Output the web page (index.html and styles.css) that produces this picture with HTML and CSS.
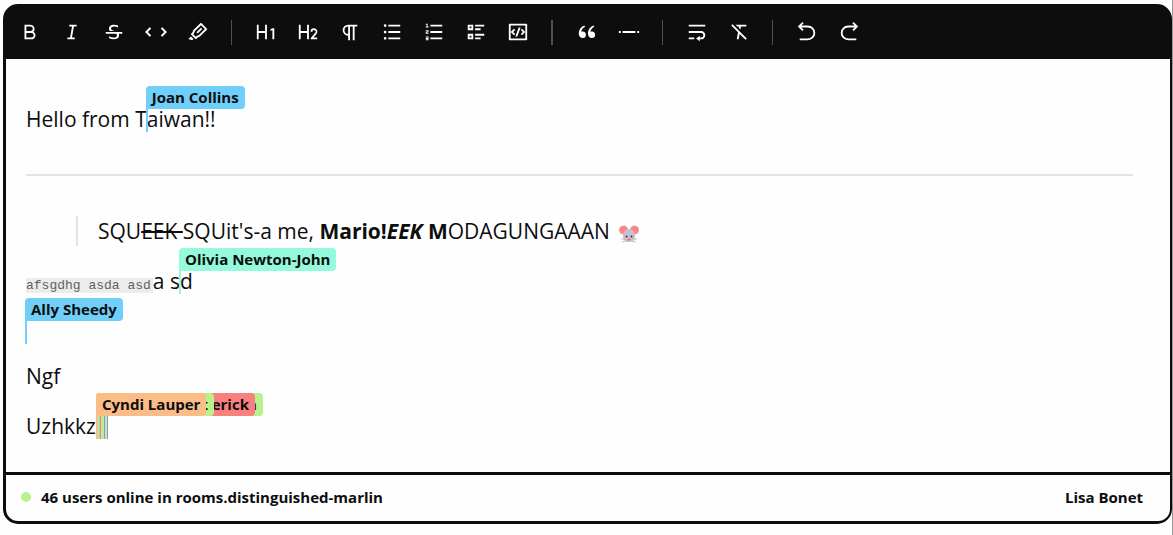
FILE: index.html
```html
<!DOCTYPE html>
<html lang="en">
<head>
<meta charset="utf-8">
<title>Collaborative editor</title>
<link rel="stylesheet" href="styles.css">
</head>
<body>
<main class="editor">
  <div class="toolbar" role="toolbar" aria-label="Formatting">
    <button class="tool" aria-label="Bold"><svg viewBox="0 0 24 24"><path d="M8 11h4.500a2.500 2.500 0 1 0 0-5H8v5zm10 4.500a4.500 4.500 0 0 1-4.500 4.500H6V4h6.500a4.500 4.500 0 0 1 3.256 7.606A4.498 4.498 0 0 1 18 15.500zM8 13v5h5.500a2.500 2.500 0 1 0 0-5H8z"/></svg></button>
    <button class="tool" aria-label="Italic"><svg viewBox="0 0 24 24"><path d="M15 20H7v-2h2.927l2.116-12H9V4h8v2h-2.927l-2.116 12H15z"/></svg></button>
    <button class="tool" aria-label="Strike"><svg viewBox="0 0 24 24"><path d="M17.154 14c.23.516.346 1.090.346 1.720 0 1.342-.524 2.392-1.571 3.147C14.880 19.622 13.433 20 11.586 20c-1.640 0-3.263-.381-4.870-1.144V16.600c1.520.877 3.075 1.316 4.666 1.316 2.551 0 3.830-.732 3.839-2.197a2.210 2.210 0 0 0-.648-1.603l-.12-.117H3v-2h18v2h-3.846zm-4.078-3H7.629a4.086 4.086 0 0 1-.481-.522C6.716 9.920 6.500 9.246 6.500 8.452c0-1.236.466-2.287 1.397-3.153C8.830 4.433 10.271 4 12.222 4c1.471 0 2.879.328 4.222.984v2.152c-1.200-.687-2.515-1.030-3.946-1.030-2.480 0-3.719.782-3.719 2.346 0 .420.218.786.654 1.099.436.313.974.562 1.613.750.620.180 1.297.414 2.030.699z"/></svg></button>
    <button class="tool" aria-label="Code"><svg viewBox="0 0 24 24"><path d="M6 7.500L1.500 12 6 16.500M18 7.500l4.500 4.500-4.500 4.500" fill="none" stroke="#fff" stroke-width="2.200"/></svg></button>
    <button class="tool" aria-label="Highlight"><svg viewBox="0 0 24 24"><path d="M15.243 4.515l-6.738 6.737-.707 2.121-1.040 1.041 2.828 2.829 1.040-1.041 2.122-.707 6.737-6.738-4.242-4.242zm6.364 3.535a1 1 0 0 1 0 1.414l-7.779 7.779-2.120.707-1.415 1.414a1 1 0 0 1-1.414 0l-4.243-4.243a1 1 0 0 1 0-1.414l1.414-1.414.707-2.121 7.779-7.779a1 1 0 0 1 1.414 0l5.657 5.657zm-6.364-.707l1.414 1.414-4.950 4.950-1.414-1.414 4.950-4.950zM4.283 16.890l2.828 2.829-1.414 1.414-4.243-1.414 2.828-2.829z"/></svg></button>
    <span class="divider"></span>
    <button class="tool" aria-label="Heading 1"><svg viewBox="0 0 24 24"><path d="M13 20h-2v-7H4v7H2V4h2v7h7V4h2v16zm8-12v12h-2v-9.796l-2 .536V8.670L19.500 8H21z"/></svg></button>
    <button class="tool" aria-label="Heading 2"><svg viewBox="0 0 24 24"><path d="M4 4v7h7V4h2v16h-2v-7H4v7H2V4h2zm14.500 4a3.750 3.750 0 0 1 2.978 6.029l-.148.180L18.034 18H22v2h-7v-1.556l4.820-5.546a1.750 1.750 0 1 0-3.065-1.292l-.005.144h-2A3.750 3.750 0 0 1 18.500 8z"/></svg></button>
    <button class="tool" aria-label="Paragraph"><svg viewBox="0 0 24 24"><path d="M12 6v15h-2v-5a6 6 0 1 1 0-12h10v2h-3v15h-2V6h-3zm-2 0a4 4 0 1 0 0 8V6z"/></svg></button>
    <button class="tool" aria-label="Bullet list"><svg viewBox="0 0 24 24"><path d="M8 4h13v2H8V4zM4.500 6.500a1.500 1.500 0 1 1 0-3 1.500 1.500 0 0 1 0 3zm0 7a1.500 1.500 0 1 1 0-3 1.500 1.500 0 0 1 0 3zm0 6.900a1.500 1.500 0 1 1 0-3 1.500 1.500 0 0 1 0 3zM8 11h13v2H8v-2zm0 7h13v2H8v-2z"/></svg></button>
    <button class="tool" aria-label="Ordered list"><svg viewBox="0 0 24 24"><path d="M8 4h13v2H8V4zM5 3v3h1v1H3V6h1V4H3V3h2zM3 14v-2.500h2V11H3v-1h3v2.500H4v.5h2v1H3zm2 5.500H3v-1h2V18H3v-1h3v4H3v-1h2v-.5zM8 11h13v2H8v-2zm0 7h13v2H8v-2z"/></svg></button>
    <button class="tool" aria-label="Task list"><svg viewBox="0 0 24 24"><path d="M11 4h10v2H11V4zm0 4h6v2h-6V8zm0 6h10v2H11v-2zm0 4h6v2h-6v-2zM3 4h6v6H3V4zm2 2v2h2V6H5zm-2 8h6v6H3v-6zm2 2v2h2v-2H5z"/></svg></button>
    <button class="tool" aria-label="Code block"><svg viewBox="0 0 24 24"><path d="M3 3h18a1 1 0 0 1 1 1v16a1 1 0 0 1-1 1H3a1 1 0 0 1-1-1V4a1 1 0 0 1 1-1zm1 2v14h16V5H4zm16 7l-3.536 3.536-1.414-1.415L17.172 12 15.050 9.879l1.414-1.415L20 12zM6.828 12l2.122 2.121-1.414 1.415L4 12l3.536-3.536L8.950 9.880 6.828 12zm4.416 5H9.116l3.640-10h2.128l-3.640 10z"/></svg></button>
    <span class="divider thick"></span>
    <button class="tool" aria-label="Blockquote"><svg viewBox="0 0 24 24"><path d="M4.583 17.321C3.553 16.227 3 15 3 13.011c0-3.500 2.457-6.637 6.030-8.188l.893 1.378c-3.335 1.804-3.987 4.145-4.247 5.621.537-.278 1.240-.375 1.929-.311 1.804.167 3.226 1.648 3.226 3.489a3.500 3.500 0 0 1-3.500 3.500c-1.073 0-2.099-.490-2.748-1.179zm10 0C13.553 16.227 13 15 13 13.011c0-3.500 2.457-6.637 6.030-8.188l.893 1.378c-3.335 1.804-3.987 4.145-4.247 5.621.537-.278 1.240-.375 1.929-.311 1.804.167 3.226 1.648 3.226 3.489a3.500 3.500 0 0 1-3.500 3.500c-1.073 0-2.099-.490-2.748-1.179z"/></svg></button>
    <button class="tool" aria-label="Horizontal rule"><svg viewBox="0 0 24 24"><path d="M1 11h2v2H1zm4 0h14v2H5zm16 0h2v2h-2z"/></svg></button>
    <span class="divider"></span>
    <button class="tool" aria-label="Hard break"><svg viewBox="0 0 24 24"><path d="M15 18h1.500a2.500 2.500 0 1 0 0-5H3v-2h13.500a4.500 4.500 0 1 1 0 9H15v2l-4-3 4-3v2zM3 4h18v2H3V4zm6 14v2H3v-2h6z"/></svg></button>
    <button class="tool" aria-label="Clear format"><svg viewBox="0 0 24 24"><path d="M12.651 14.065L11.605 20H9.574l1.350-7.661-7.410-7.410L4.930 3.515 20.485 19.070l-1.414 1.414-6.420-6.420zm-.878-6.535l.270-1.530h-1.800l-2-2H20v2h-5.927L13.500 9.257 11.773 7.530z"/></svg></button>
    <span class="divider"></span>
    <button class="tool" aria-label="Undo"><svg viewBox="0 0 24 24"><path d="M5.828 7l2.536 2.536L6.950 10.950 2 6l4.950-4.950 1.414 1.414L5.828 5H13a8 8 0 1 1 0 16H4v-2h9a6 6 0 1 0 0-12H5.828z"/></svg></button>
    <button class="tool" aria-label="Redo"><svg viewBox="0 0 24 24"><path d="M18.172 7H11a6 6 0 1 0 0 12h9v2h-9a8 8 0 1 1 0-16h7.172l-2.536-2.536L17.050 1.050 22 6l-4.950 4.950-1.414-1.414L18.172 7z"/></svg></button>
  </div>
  <article class="content">
    <p>Hello from T<span class="caret blue"><span class="name">Joan Collins</span></span>aiwan!!</p>
    <hr>
    <blockquote>SQU<s>EEK </s>SQUit's-a me, <strong>Mario!<em>EEK</em> M</strong>ODAGUNGAAAN <svg class="mouse" viewBox="0 0 20 18" role="img" aria-label="Mouse"><circle cx="4.500" cy="5" r="4.500" fill="#c8bfd0"/><circle cx="15.500" cy="5" r="4.500" fill="#c8bfd0"/><circle cx="4.500" cy="5" r="4" fill="#ff8585"/><circle cx="15.500" cy="5" r="4" fill="#ff8585"/><path d="M10 4c4 0 6 4 6 7 0 4-3 6-6 6s-6-2-6-6c0-3 2-7 6-7z" fill="#c8bfd0"/><circle cx="7.500" cy="11.500" r="1" fill="#333"/><circle cx="12.500" cy="11.500" r="1" fill="#333"/><ellipse cx="10" cy="14.500" rx="1.800" ry="1" fill="#ff6b75"/><path d="M2 14h4M3 17l4-1M18 14h-4M17 17l-4-1" stroke="#aaa1b0" stroke-width=".7"/></svg></blockquote>
    <p><code>afsgdhg asda asd</code>a s<span class="caret mint"><span class="name">Olivia Newton-John</span></span>d</p>
    <p class="blank"><span class="caret blue"><span class="name">Ally Sheedy</span></span></p>
    <p>Ngf</p>
    <p>Uzhkkz<span class="caret stack"><span class="name green wide">n</span><span class="name red medium">erick</span><span class="name green short">t</span><span class="name orange">Cyndi Lauper</span></span></p>
  </article>
  <footer class="footer">
    <span class="status">46 users online in rooms.distinguished-marlin</span>
    <button class="user">Lisa Bonet</button>
  </footer>
</main>
</body>
</html>
```
FILE: styles.css
```css
* { box-sizing: border-box; }
body {
  margin: 0;
  padding: 4px 0 11px 3px;
  border-right: 1px solid #999;
  background: #fefefe;
  color: #0d0d0d;
  font-family: "Open Sans", "Noto Sans", sans-serif;
}
button { border: 0; background: none; color: inherit; font: inherit; cursor: pointer; }
.editor {
  border: solid #0d0d0d;
  border-width: 3px 2px 3px 3px;
  border-radius: 15px;
  background: #0d0d0d;
}
.toolbar { display: flex; align-items: center; padding: 11px 10px 13px; }
.tool { width: 28px; height: 28px; margin-right: 14px; padding: 3px; }
.tool svg { display: block; width: 22px; height: 22px; fill: #fff; }
.divider { width: 1px; height: 25px; margin: 0 20px 0 5px; background: #505050; }
.divider.thick { width: 2px; }
.content {
  padding: 45px 37px 11px 20px;
  background: #fefefe;
  font-size: 21px;
  line-height: 30px;
}
.content p { margin: 0 0 20px; }
.content hr { margin: 40px 0; border: 0; border-top: 2px solid #e3e3e3; }
.content blockquote { margin: 0 50px 20px; padding-left: 20px; border-left: 2px solid #e3e3e3; }
.content code {
  padding-right: 2px;
  background: #ececec;
  color: #616161;
  font: 13px/16px "Liberation Mono", monospace;
}
.content .blank { height: 25px; }
.mouse { width: 20px; height: 18px; margin-left: 4px; vertical-align: -4px; }
.caret {
  position: relative;
  display: inline-block;
  width: 2px;
  height: 23px;
  margin: 0 -1px;
  background: var(--tint);
  vertical-align: -5px;
}
.caret.stack {
  width: 12px;
  margin: 0;
  background: linear-gradient(90deg,
    #fbbc88 0 2px, #b9f18d 2px 3px, #94d8db 3px 4px, #fa8080 4px 5px,
    #b9f18d 5px 8px, #958df1 8px 9px, #b9f18d 9px 11px, #958df1 11px);
}
.name {
  position: absolute;
  bottom: 100%;
  left: 0;
  padding: 0 6px;
  border-radius: 4px 4px 4px 0;
  background: var(--tint);
  font-size: 15px;
  font-weight: 700;
  line-height: 23px;
  white-space: nowrap;
}
.blue { --tint: #70cff8; }
.mint { --tint: #94fadb; }
.green { --tint: #b9f18d; }
.red { --tint: #fa8080; }
.orange { --tint: #fbbc88; }
.name.wide { width: 167px; text-align: right; }
.name.medium { width: 159px; text-align: right; }
.name.short { width: 118px; text-align: right; }
.footer {
  display: flex;
  justify-content: space-between;
  align-items: center;
  margin-top: 3px;
  padding: 11px 27px 13px 15px;
  border-radius: 0 0 12px 12px;
  background: #fefefe;
  font-size: 15px;
  font-weight: 700;
  line-height: 22px;
}
.status { display: flex; align-items: center; gap: 10px; }
.status::before { content: ""; width: 10px; height: 10px; border-radius: 50%; background: #b9f18d; }
.user { padding: 0; }
```
